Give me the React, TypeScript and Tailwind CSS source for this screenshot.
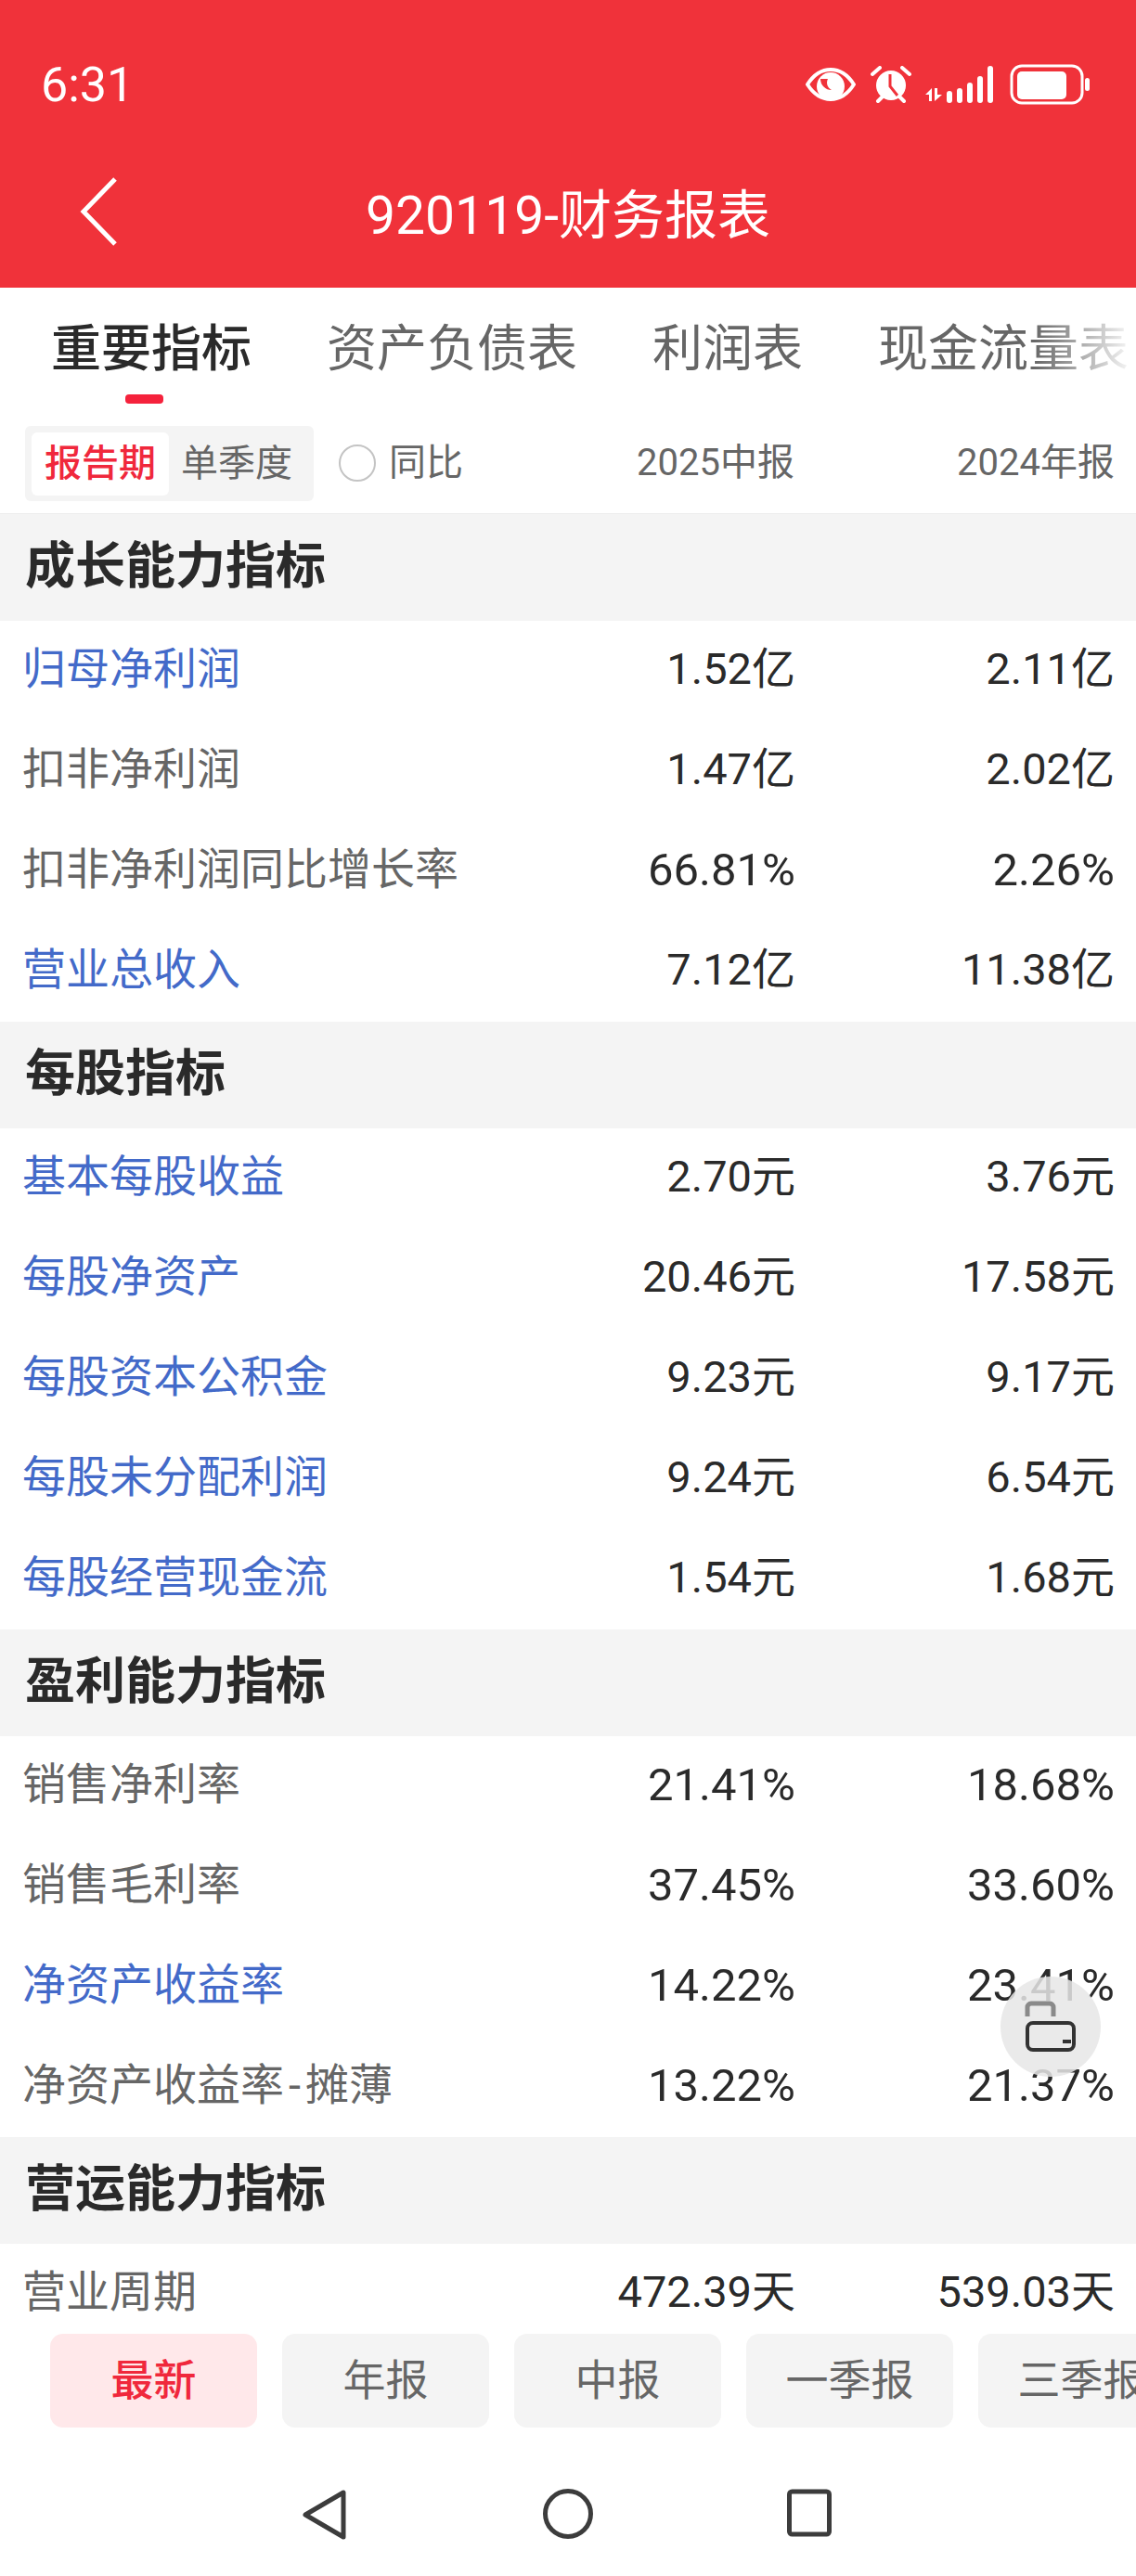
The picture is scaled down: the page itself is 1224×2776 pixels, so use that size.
import React from "react";

type Row = { label: string; a: string; b: string; link?: boolean };
type Section = { title: string; rows: Row[] };

const sections: Section[] = [
  {
    title: "成长能力指标",
    rows: [
      { label: "归母净利润", a: "1.52亿", b: "2.11亿", link: true },
      { label: "扣非净利润", a: "1.47亿", b: "2.02亿" },
      { label: "扣非净利润同比增长率", a: "66.81%", b: "2.26%" },
      { label: "营业总收入", a: "7.12亿", b: "11.38亿", link: true },
    ],
  },
  {
    title: "每股指标",
    rows: [
      { label: "基本每股收益", a: "2.70元", b: "3.76元", link: true },
      { label: "每股净资产", a: "20.46元", b: "17.58元", link: true },
      { label: "每股资本公积金", a: "9.23元", b: "9.17元", link: true },
      { label: "每股未分配利润", a: "9.24元", b: "6.54元", link: true },
      { label: "每股经营现金流", a: "1.54元", b: "1.68元", link: true },
    ],
  },
  {
    title: "盈利能力指标",
    rows: [
      { label: "销售净利率", a: "21.41%", b: "18.68%" },
      { label: "销售毛利率", a: "37.45%", b: "33.60%" },
      { label: "净资产收益率", a: "14.22%", b: "23.41%", link: true },
      { label: "净资产收益率-摊薄", a: "13.22%", b: "21.37%" },
    ],
  },
  {
    title: "营运能力指标",
    rows: [{ label: "营业周期", a: "472.39天", b: "539.03天" }],
  },
];

const tabs = ["资产负债表", "利润表", "现金流量表"];
const periods = ["年报", "中报", "一季报", "三季报"];

function StatusIcons() {
  return (
    <div className="flex items-center">
      <svg width="54" height="36" viewBox="0 0 54 36" className="mr-4">
        <path d="M2 18C9 7 17 2 27 2s18 5 25 16c-7 11-15 16-25 16S9 29 2 18z" fill="none" stroke="#fff" strokeWidth="4" strokeLinejoin="round" />
        <circle cx="27" cy="20" r="15" fill="#fff" />
        <path d="M16 12a12 12 0 0 0 12 12c-5-3-6-8-4-12z" fill="#f0323a" />
      </svg>
      <svg width="44" height="40" viewBox="0 0 44 40" className="mr-[14px]">
        <circle cx="22" cy="21" r="16" fill="#fff" />
        <path d="M21 9v13l8 10" fill="none" stroke="#f0323a" strokeWidth="3" />
        <path d="M2 9l8-7M42 9l-8-7M8 38l5-5M36 38l-5-5" stroke="#fff" strokeWidth="4" strokeLinecap="round" />
      </svg>
      <svg width="76" height="40" viewBox="0 0 76 40" className="mr-4">
        <path d="M5 38V31H1L8 24V38z" fill="#fff" />
        <path d="M11 24V38L19 31H14V24z" fill="#fff" />
        <rect x="24" y="27" width="6" height="13" rx="3" fill="#fff" />
        <rect x="35" y="24" width="6" height="16" rx="3" fill="#fff" />
        <rect x="46" y="18" width="6" height="22" rx="3" fill="#fff" />
        <rect x="57" y="11" width="6" height="29" rx="3" fill="#fff" />
        <rect x="68" y="0" width="6" height="40" rx="3" fill="#fff" />
      </svg>
      <svg width="86" height="44" viewBox="0 0 86 44">
        <rect x="2" y="2" width="76" height="40" rx="11" fill="none" stroke="#fff" strokeWidth="3" />
        <rect x="8" y="8" width="53" height="30" rx="5" fill="#fff" />
        <rect x="81" y="15" width="5" height="14" rx="2.5" fill="#fff" />
      </svg>
    </div>
  );
}

function FloatingButton() {
  return (
    <div className="absolute left-[1078px] top-[2130px] flex h-[108px] w-[108px] items-center justify-center rounded-full bg-[#e6e6e6]/85">
      <svg width="108" height="108" viewBox="0 0 108 108">
        <path d="M29 43V33a4 4 0 0 1 4-4h20a4 4 0 0 1 4 4v10" fill="none" stroke="#8a8a8a" strokeWidth="5" />
        <rect x="29" y="50" width="50" height="29" rx="6" fill="none" stroke="#333" strokeWidth="4" />
        <rect x="67" y="68" width="9" height="4" fill="#333" />
      </svg>
    </div>
  );
}

// the hyphen in the reference sets wider than the font's own
function Label({ text }: { text: string }) {
  const parts = text.split("-");
  if (parts.length === 1) return <>{text}</>;
  return (
    <>
      {parts[0]}
      <span className="mx-[5px]">-</span>
      {parts[1]}
    </>
  );
}

function Value({ text, className = "" }: { text: string; className?: string }) {
  const size = text.endsWith("%") ? "text-[49px]" : "text-[47px]";
  return <span className={`whitespace-nowrap text-right ${size} ${className}`}>{text}</span>;
}

export default function App() {
  return (
    <div
      className="relative flex h-[2776px] w-[1224px] flex-col overflow-hidden bg-white"
      style={{ fontFamily: 'Roboto, "Noto Sans CJK SC", sans-serif' }}
    >
      {/* header */}
      <div className="h-[310px] shrink-0 bg-[#f0323a] text-white">
        <div className="flex h-[182px] items-center justify-between pl-[44px] pr-[50px]">
          <span className="pt-[2px] text-[52px] leading-none">6:31</span>
          <StatusIcons />
        </div>
        <div className="relative flex h-[92px] items-center justify-center">
          <svg className="absolute left-[84px] top-[8px]" width="44" height="76" viewBox="0 0 44 76">
            <path d="M40 3L6 38l34 35" fill="none" stroke="#fff" strokeWidth="5" />
          </svg>
          <span className="pt-[8px] text-[57px] leading-none">920119-财务报表</span>
        </div>
      </div>

      {/* tabs */}
      <div className="relative h-[139px] shrink-0 overflow-hidden">
        <div className="flex gap-[81px] whitespace-nowrap pl-[55px] pt-[31px] text-[54px] leading-[72px] text-[#666]">
          <span className="font-medium text-[#2a2a2a]">重要指标</span>
          {tabs.map((t) => (
            <span key={t}>{t}</span>
          ))}
        </div>
        <div className="absolute left-[135px] top-[115px] h-[10px] w-[41px] rounded-[4px] bg-[#f5223c]" />
        <div className="absolute right-0 top-[20px] h-[90px] w-[110px] bg-gradient-to-r from-white/0 to-white" />
      </div>

      {/* filter row */}
      <div className="flex h-[105px] shrink-0 items-start border-b border-[#ececec] pl-[27px] pr-[23px] pt-[10px] text-[40px] text-[#666]">
        <div className="flex h-[81px] w-[311px] items-center rounded-[6px] bg-[#f4f4f4] pl-[7px]">
          <span className="flex h-[68px] w-[148px] items-center justify-center rounded-[6px] bg-white font-medium text-[#f0283c]">报告期</span>
          <span className="ml-[13px]">单季度</span>
        </div>
        <div className="ml-[27px] mt-[20px] h-[40px] w-[40px] rounded-full border-2 border-[#c4c4c4]" />
        <span className="ml-[14px] mt-[14px] leading-[52px]">同比</span>
        <span className="mt-[14px] flex-1 text-right leading-[52px]">2025中报</span>
        <span className="mt-[14px] w-[345px] text-right leading-[52px]">2024年报</span>
      </div>

      {/* table */}
      <div className="min-h-0 flex-1 overflow-hidden">
        {sections.map((s) => (
          <div key={s.title}>
            <div className="flex h-[115px] items-center bg-[#f4f4f4] pb-[2px] pl-[27px] text-[54px] font-bold text-[#2a2a2a]">
              {s.title}
            </div>
            {s.rows.map((r) => (
              <div key={r.label} className="flex h-[108px] items-center pb-[3px] pl-[24px] pr-[23px] text-[47px] text-[#2a2a2a]">
                <span className={`flex-1 whitespace-nowrap ${r.link ? "text-[#436ac9]" : "text-[#666]"}`}>
                  <Label text={r.label} />
                </span>
                <Value text={r.a} />
                <Value text={r.b} className="w-[344px]" />
              </div>
            ))}
          </div>
        ))}
      </div>

      {/* period buttons */}
      <div className="flex h-[101px] shrink-0 gap-[27px] overflow-hidden whitespace-nowrap bg-white pl-[54px] text-[46px] text-[#666]">
        <div className="flex w-[223px] shrink-0 items-center justify-center rounded-[14px] bg-[#ffe8ea] font-medium text-[#f0283c]">最新</div>
        {periods.map((p) => (
          <div key={p} className="flex w-[223px] shrink-0 items-center justify-center rounded-[14px] bg-[#f4f4f4]">{p}</div>
        ))}
      </div>

      {/* system nav */}
      <div className="flex h-[160px] shrink-0 items-start justify-center bg-white pr-[3px] pt-[66px]">
        <svg width="48" height="56" viewBox="0 0 48 56">
          <path d="M45 4v48L4 28z" fill="none" stroke="#3c3c3c" strokeWidth="5" strokeLinejoin="round" />
        </svg>
        <svg width="54" height="54" viewBox="0 0 54 54" className="ml-[212px]">
          <circle cx="27" cy="27" r="24.5" fill="none" stroke="#3c3c3c" strokeWidth="5" />
        </svg>
        <svg width="48" height="52" viewBox="0 0 48 52" className="ml-[209px]">
          <rect x="2.5" y="3" width="43" height="46" rx="3" fill="none" stroke="#3c3c3c" strokeWidth="5" />
        </svg>
      </div>

      <FloatingButton />
    </div>
  );
}
